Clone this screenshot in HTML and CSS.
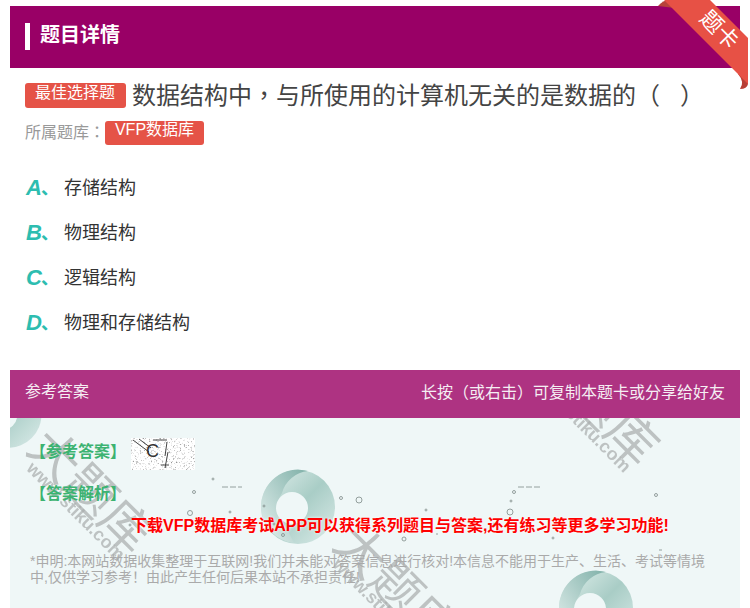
FILE: index.html
```html
<!DOCTYPE html>
<html lang="zh-CN">
<head>
<meta charset="utf-8">
<title>题目详情</title>
<link rel="stylesheet" href="styles.css">
</head>
<body>
<div class="page">
  <header class="head"><h1 class="head-title">题目详情</h1></header>
  <div class="ribbon">
    <svg class="ribbon-fold" width="92" height="92" viewBox="0 0 92 92">
      <path d="M0 6 Q5 0 11 0 L17 8 Z" fill="#b7423a"/>
      <path d="M90 60 L90 84 Q89 89 82 89 Q87 82 80 74 Z" fill="#b83f36"/>
      <path d="M6 0 L52 0 L90 38 L90 84 Z" fill="#e75145"/>
    </svg>
    <span class="ribbon-text">题卡</span>
  </div>
  <section class="question">
    <div class="q-line"><span class="tag tag-q">最佳选择题</span><span class="q-text">数据结构中<span class="punct" lang="zh-Hant">，</span>与所使用的计算机无关的是数据的<span class="punct" lang="zh-Hant">（</span>&nbsp;&nbsp;&nbsp;<span class="punct" lang="zh-Hant">）</span></span></div>
    <div class="lib-line"><span class="lib-label">所属题库<span class="punct" lang="zh-Hant">：</span></span><span class="tag tag-lib">VFP数据库</span></div>
  </section>
  <ul class="options">
    <li class="option"><b class="opt-key">A</b><span class="opt-mark">、</span><span class="opt-text">存储结构</span></li>
    <li class="option"><b class="opt-key">B</b><span class="opt-mark">、</span><span class="opt-text">物理结构</span></li>
    <li class="option"><b class="opt-key">C</b><span class="opt-mark">、</span><span class="opt-text">逻辑结构</span></li>
    <li class="option"><b class="opt-key">D</b><span class="opt-mark">、</span><span class="opt-text">物理和存储结构</span></li>
  </ul>
  <section class="card">
    <div class="card-head"><span>参考答案</span><span>长按<span class="punct" lang="zh-Hant">（</span>或右击<span class="punct" lang="zh-Hant">）</span>可复制本题卡或分享给好友</span></div>
    <div class="card-body">
      <svg class="bg" width="730" height="190" viewBox="0 0 730 190">
        <defs>
          <linearGradient id="sw" x1="0" y1="0" x2="1" y2="1"><stop offset="0" stop-color="#e4f1ee"/><stop offset=".5" stop-color="#a9cdc6"/><stop offset="1" stop-color="#dcecea"/></linearGradient>
          <linearGradient id="sw2" x1="1" y1="0" x2="0" y2="1"><stop offset="0" stop-color="#7fb0a8"/><stop offset="1" stop-color="#e8f3f1"/></linearGradient>
          <g id="swirl">
            <circle r="37" fill="url(#sw)"/>
            <path d="M-37 0 A37 37 0 0 1 10 -36 A30 30 0 0 0 -16 -14 A26 26 0 0 0 -12 20 L-4 36 A37 37 0 0 1 -37 0Z" fill="url(#sw2)"/>
            <circle cx="-6" cy="1" r="16" fill="#eff7f7"/>
          </g>
          <g id="mark">
            <text class="wm-big" x="-2" y="25">大题库</text>
            <text class="wm-small" x="12" y="38">www.stiku.com</text>
          </g>
        </defs>
        <use href="#swirl" x="-2" y="-4" transform="scale(.9)"/>
        <use href="#swirl" x="288" y="89"/>
        <use href="#swirl" x="586" y="190"/>
        <use href="#mark" transform="translate(34 16) rotate(45)"/>
        <use href="#mark" transform="translate(340 112) rotate(45)"/>
        <use href="#mark" transform="translate(540 -72) rotate(45)"/>
        <g class="dots">
          <circle cx="184" cy="74" r="1.5"/><circle cx="180" cy="95" r="2.5"/><circle cx="220" cy="94" r="1"/><circle cx="120" cy="107" r="1"/>
          <circle cx="331" cy="80" r="1.5"/><circle cx="349" cy="82" r="3"/><circle cx="254" cy="88" r="1"/><circle cx="264" cy="106" r="1"/>
          <circle cx="273" cy="117" r="1.5"/><circle cx="203" cy="61" r="1"/><circle cx="504" cy="74" r="1.5"/><circle cx="501" cy="83" r="1"/>
          <circle cx="646" cy="77" r="1.5"/><circle cx="416" cy="92" r="1"/><circle cx="500" cy="94" r="3"/><circle cx="543" cy="120" r="1"/>
          <circle cx="394" cy="121" r="2"/><circle cx="484" cy="106" r="1"/><circle cx="638" cy="114" r="1"/><circle cx="593" cy="108" r="1"/>
          <path d="M212 69 H232 M508 69 H531 M649 132 h3 M426 116 h2" stroke-dasharray="6 2"/>
        </g>
      </svg>
      <div class="answer-row">
        <span class="label">【参考答案】</span>
        <span class="answer-img">
          <svg class="noise" width="64" height="32" viewBox="0 0 64 32">
            <defs>
              <filter id="speck" x="0" y="0" width="100%" height="100%">
                <feTurbulence type="fractalNoise" baseFrequency=".55" numOctaves="2" seed="7"/>
                <feColorMatrix type="matrix" values="0 0 0 0 .3  0 0 0 0 .3  0 0 0 0 .3  3.5 0 0 0 -1.95"/>
              </filter>
            </defs>
            <rect width="64" height="32" fill="#fff"/>
            <rect width="64" height="32" filter="url(#speck)"/>
            <path d="M2 2 L18 14 M8 1 L20 10 M36 4 L34 18 M37 14 L34 30 M30 27 h8 M22 2 h14" stroke="#444" fill="none"/>
          </svg>
          <span class="answer-letter">C</span>
        </span>
      </div>
      <div class="label label-explain">【答案解析】</div>
      <p class="promo">下载VFP数据库考试APP可以获得系列题目与答案,还有练习等更多学习功能!</p>
      <p class="note">*申明:本网站数据收集整理于互联网!我们并未能对答案信息进行核对!本信息不能用于生产、生活、考试等情境中,仅供学习参考！由此产生任何后果本站不承担责任!</p>
    </div>
  </section>
</div>
</body>
</html>
```
FILE: styles.css
```css
* { box-sizing: border-box; }
html, body { margin: 0; height: 608px; overflow: hidden; background: #fff; }
body { font-family: "Liberation Sans", "Noto Sans CJK SC", sans-serif; }
.page { position: relative; height: 608px; padding: 6px 10px 0; overflow: hidden; }
.punct { font-family: "Noto Sans CJK TC", sans-serif; }
.head { height: 62px; background: #990066; padding: 17px 15px; }
.head-title { margin: 0; height: 27px; padding-left: 10px; border-left: 5px solid #fff; font-size: 20px; line-height: 24px; font-weight: 700; color: #fff; }
.ribbon { position: absolute; left: 658px; top: 0; width: 92px; height: 92px; }
.ribbon-fold { display: block; }
.ribbon-text { position: absolute; left: 33px; top: 18px; width: 56px; text-align: center; font-size: 22px; line-height: 24px; color: #fff; transform: rotate(45deg); white-space: nowrap; }
.question { padding: 13px 15px 0; }
.q-line { display: flex; align-items: center; gap: 6px; height: 28px; }
.tag { display: inline-block; background: #e55347; color: #fff; border-radius: 3px; font-size: 16px; }
.tag-q { width: 101px; height: 25px; line-height: 19px; padding-left: 10px; }
.q-text { font-size: 24px; line-height: 28px; color: #444; white-space: nowrap; }
.lib-line { display: flex; margin-top: 12px; height: 24px; }
.lib-label { width: 80px; font-size: 16px; line-height: 20px; color: #999; white-space: nowrap; }
.tag-lib { width: 99px; height: 24px; line-height: 18px; text-align: center; }
.options { list-style: none; margin: 20px 0 0; padding: 0 0 0 16px; }
.option { display: flex; align-items: center; height: 45px; }
.opt-key { width: 15px; font-size: 22px; line-height: 28px; font-style: italic; color: #2dbdb0; }
.opt-mark { width: 23px; font-size: 18px; line-height: 28px; font-weight: 700; color: #2dbdb0; }
.opt-text { font-size: 18px; line-height: 28px; color: #333; }
.card { margin-top: 25px; }
.card-head { display: flex; justify-content: space-between; height: 48px; padding: 0 15px; background: #ae3382; color: #f5eef3; font-size: 16px; line-height: 43px; }
.card-body { position: relative; height: 190px; background: #eff7f7; padding: 20px 20px 0; overflow: hidden; }
.bg { position: absolute; left: 0; top: 0; }
.wm-big { font-size: 50px; fill: #a9adad; opacity: .7; font-family: "Noto Sans CJK SC", sans-serif; font-weight: 400; }
.wm-small { font-size: 18px; font-weight: 700; fill: #a9adad; opacity: .7; }
.dots { fill: none; stroke: #7d8a88; stroke-width: .8; }
.answer-row { position: relative; display: flex; align-items: flex-start; }
.label { position: relative; font-size: 16px; line-height: 27px; font-weight: 700; color: #3cb371; }
.answer-row .label { width: 101px; }
.answer-img { position: relative; display: block; width: 64px; height: 32px; }
.noise { display: block; }
.answer-letter { position: absolute; left: 15px; top: 2px; font-size: 18px; line-height: 22px; color: #333; }
.label-explain { margin-top: 10px; }
.promo { position: relative; margin: 9px 0 0 50px; text-align: center; font-size: 16px; line-height: 20px; font-weight: 700; color: #f00; text-shadow: 0 0 3px #fff; }
.note { position: relative; margin: 17px 0 0; font-size: 14px; line-height: 16px; color: #aaa; }
```
